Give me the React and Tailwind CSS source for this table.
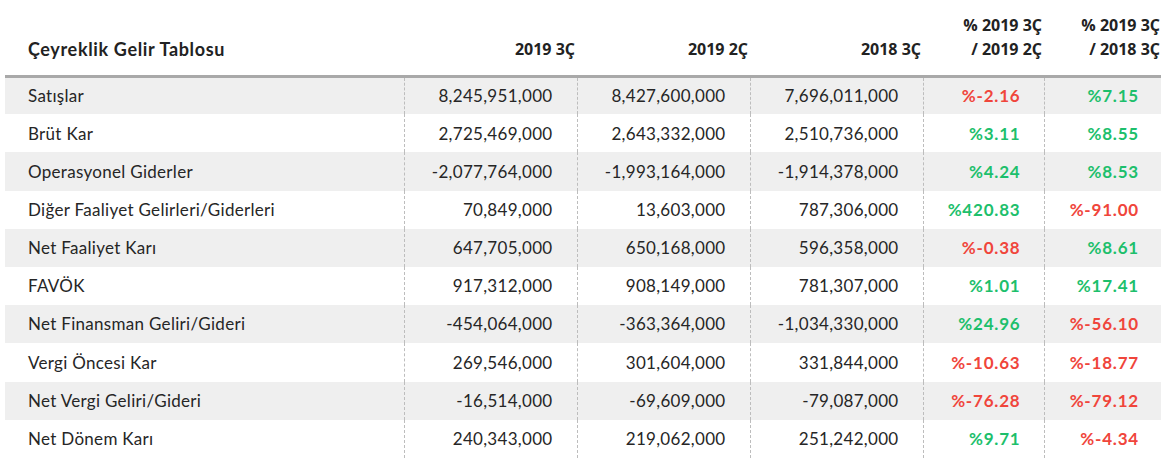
import React from "react";

const rows = [
  ["Satışlar", "8,245,951,000", "8,427,600,000", "7,696,011,000", "%-2.16", "%7.15"],
  ["Brüt Kar", "2,725,469,000", "2,643,332,000", "2,510,736,000", "%3.11", "%8.55"],
  ["Operasyonel Giderler", "-2,077,764,000", "-1,993,164,000", "-1,914,378,000", "%4.24", "%8.53"],
  ["Diğer Faaliyet Gelirleri/Giderleri", "70,849,000", "13,603,000", "787,306,000", "%420.83", "%-91.00"],
  ["Net Faaliyet Karı", "647,705,000", "650,168,000", "596,358,000", "%-0.38", "%8.61"],
  ["FAVÖK", "917,312,000", "908,149,000", "781,307,000", "%1.01", "%17.41"],
  ["Net Finansman Geliri/Gideri", "-454,064,000", "-363,364,000", "-1,034,330,000", "%24.96", "%-56.10"],
  ["Vergi Öncesi Kar", "269,546,000", "301,604,000", "331,844,000", "%-10.63", "%-18.77"],
  ["Net Vergi Geliri/Gideri", "-16,514,000", "-69,609,000", "-79,087,000", "%-76.28", "%-79.12"],
  ["Net Dönem Karı", "240,343,000", "219,062,000", "251,242,000", "%9.71", "%-4.34"],
];

const pctClass = (v) =>
  v.startsWith("%-") ? "text-[#f0453b]" : "text-[#1dbf6c]";

export default function App() {
  return (
    <div className="w-[1165px] h-[463px] bg-white pl-[5px] pr-[4px] font-['Lato','Noto_Sans',sans-serif]">
      <table className="w-[1156px] border-collapse table-fixed">
        <colgroup>
          <col className="w-[399px]" />
          <col className="w-[173px]" />
          <col className="w-[173px]" />
          <col className="w-[173px]" />
          <col className="w-[121px]" />
          <col className="w-[117px]" />
        </colgroup>
        <thead>
          <tr className="h-[76px] border-b-[3px] border-[#a9a9a9] text-[#222] align-bottom">
            <th className="text-left pl-[23px] pb-[14px] text-[18px] leading-[24px] font-bold tracking-[0.65px]">
              Çeyreklik Gelir Tablosu
            </th>
            <th className="text-right pr-[2px] pb-[14px] text-[16px] leading-[24px] font-['Open_Sans',sans-serif] font-bold">
              2019 3Ç
            </th>
            <th className="text-right pr-[2px] pb-[14px] text-[16px] leading-[24px] font-['Open_Sans',sans-serif] font-bold">
              2019 2Ç
            </th>
            <th className="text-right pr-[2px] pb-[14px] text-[16px] leading-[24px] font-['Open_Sans',sans-serif] font-bold">
              2018 3Ç
            </th>
            <th className="text-right pr-[2px] pb-[14px] text-[16px] leading-[24px] font-['Open_Sans',sans-serif] font-bold">
              % 2019 3Ç
              <br />/ 2019 2Ç
            </th>
            <th className="text-right pr-[1px] pb-[14px] text-[16px] leading-[24px] font-['Open_Sans',sans-serif] font-bold">
              % 2019 3Ç
              <br />/ 2018 3Ç
            </th>
          </tr>
        </thead>
        <tbody>
          {rows.map((r, i) => (
            <tr
              key={r[0]}
              className={`h-[38.2px] text-[17px] text-[#262626] tracking-[0.3px] ${i % 2 === 0 ? "bg-[#efefef]" : "bg-white"}`}
            >
              <td className="pl-[23px] whitespace-nowrap">{r[0]}</td>
              <td className="text-right pr-[24px] border-l border-dashed border-[#bdbdbd]">{r[1]}</td>
              <td className="text-right pr-[24px] border-l border-dashed border-[#bdbdbd]">{r[2]}</td>
              <td className="text-right pr-[24px] border-l border-dashed border-[#bdbdbd]">{r[3]}</td>
              <td className={`text-right pr-[23px] font-bold tracking-[0.8px] border-l border-dashed border-[#bdbdbd] ${pctClass(r[4])}`}>{r[4]}</td>
              <td className={`text-right pr-[22px] font-bold tracking-[0.8px] border-l border-dashed border-[#bdbdbd] ${pctClass(r[5])}`}>{r[5]}</td>
            </tr>
          ))}
        </tbody>
      </table>
    </div>
  );
}
